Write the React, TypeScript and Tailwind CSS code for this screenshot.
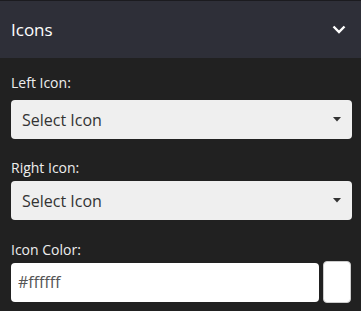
import React, { useState } from 'react';

function Caret() {
  return (
    <svg width="8" height="5" viewBox="0 0 8 5" className="shrink-0">
      <path d="M0 0h8L4 4.5z" fill="#333" />
    </svg>
  );
}

function SelectBox({ value }: { value: string }) {
  return (
    <div className="flex h-[39px] items-center justify-between rounded-[4px] bg-[#efefef] pl-[11px] pr-[11px]">
      <span className="text-[16px] text-[#333]">{value}</span>
      <Caret />
    </div>
  );
}

export default function App() {
  const [color, setColor] = useState('#ffffff');

  return (
    <div
      className="h-[311px] w-[361px] overflow-hidden bg-[#212121]"
      style={{ fontFamily: '"Open Sans", "Noto Sans", sans-serif' }}
    >
      <div className="flex h-[58px] items-center justify-between border-t border-[#1b1b1f] bg-[#2e2f38] pl-[11px] pr-[15px]">
        <span className="text-[17px] text-white">Icons</span>
        <svg width="14" height="9" viewBox="0 0 14 9">
          <path d="M1.5 1.5 7 7l5.5-5.5" fill="none" stroke="#fff" strokeWidth="2.4" />
        </svg>
      </div>

      <div className="pl-[11px] pr-[9px] pt-[15px]">
        <label className="mb-[7px] block text-[14px] leading-[20px] text-[#eee]">Left Icon:</label>
        <SelectBox value="Select Icon" />

        <label className="mb-[3px] mt-[19px] block text-[14px] leading-[20px] text-[#eee]">Right Icon:</label>
        <SelectBox value="Select Icon" />

        <label className="mb-[1px] mt-[20px] block text-[14px] leading-[20px] text-[#eee]">Icon Color:</label>
        <div className="flex h-[42px] items-center gap-[4px]">
          <input
            value={color}
            onChange={(e) => setColor(e.target.value)}
            className="h-[39px] w-[308px] rounded-[4px] bg-white px-[7px] text-[16px] text-[#555] outline-none"
          />
          <div className="h-[42px] w-[28px] rounded-[4px] border border-[#ccc] bg-white" />
        </div>
      </div>
    </div>
  );
}
